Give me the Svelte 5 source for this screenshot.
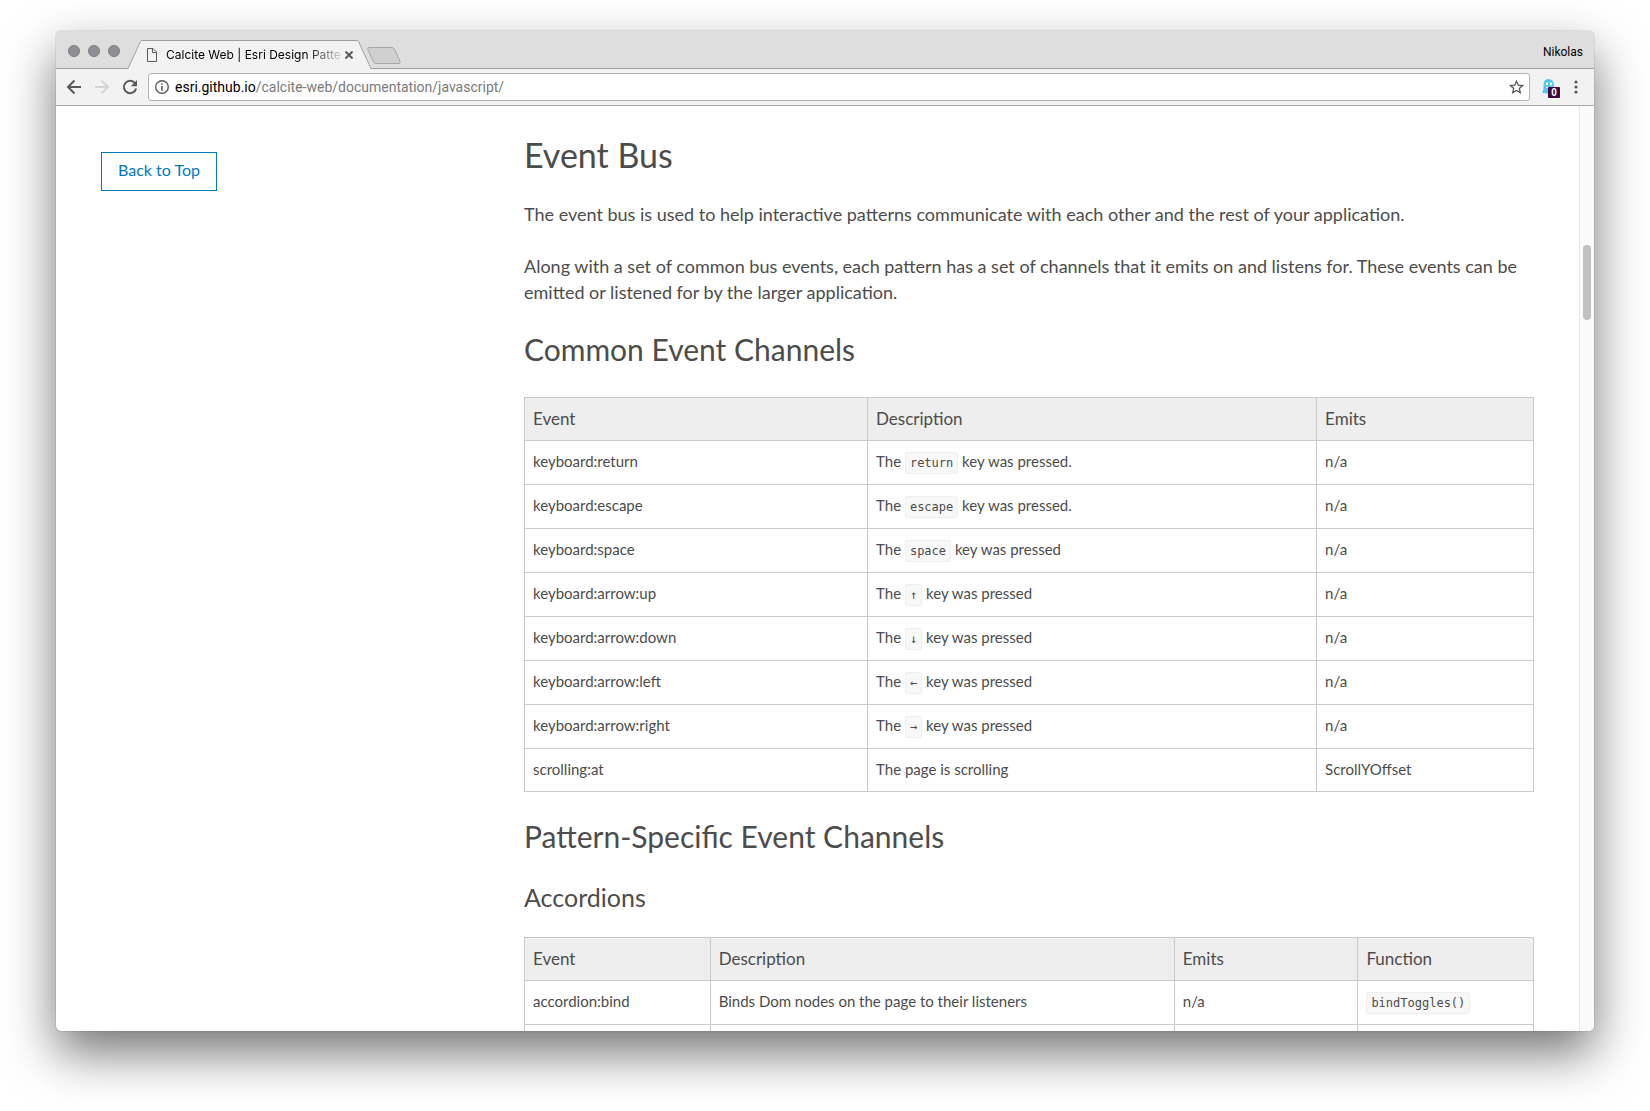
<script>
  const commonEvents = [
    { event: 'keyboard:return', key: 'return', after: 'key was pressed.', emits: 'n/a' },
    { event: 'keyboard:escape', key: 'escape', after: 'key was pressed.', emits: 'n/a' },
    { event: 'keyboard:space', key: 'space', after: 'key was pressed', emits: 'n/a' },
    { event: 'keyboard:arrow:up', key: '↑', after: 'key was pressed', emits: 'n/a' },
    { event: 'keyboard:arrow:down', key: '↓', after: 'key was pressed', emits: 'n/a' },
    { event: 'keyboard:arrow:left', key: '←', after: 'key was pressed', emits: 'n/a' },
    { event: 'keyboard:arrow:right', key: '→', after: 'key was pressed', emits: 'n/a' },
    { event: 'scrolling:at', text: 'The page is scrolling', emits: 'ScrollYOffset' },
  ];
</script>

<div class="window">
  <header class="tab-strip">
    <div class="lights"><i></i><i></i><i></i></div>
    <div class="tab">
      <svg class="edge" width="14" height="29" viewBox="0 0 14 29" aria-hidden="true">
        <path d="M0 29V28.5L12.5 1.5Q13 .5 14 .5V29Z" fill="#f2f2f2" />
        <path d="M0 28.5L12.5 1.5Q13 .5 14 .5" fill="none" stroke="#a0a0a0" />
      </svg>
      <div class="tab-body">
        <svg width="10" height="14" viewBox="0 0 10 14" fill="none" stroke="#5a5a5a" aria-hidden="true">
          <path d="M.5.5H6L9.5 4V13.5H.5ZM5.5.5V4.5H9.5" />
        </svg>
        <span class="tab-title">Calcite Web | Esri Design Patte</span>
        <button class="plain close" aria-label="Close tab">
          <svg width="8" height="8" viewBox="0 0 8 8" stroke="#5a5a5a" stroke-width="2"><path d="M.5.5L7.5 7.5M7.5.5L.5 7.5" /></svg>
        </button>
      </div>
      <svg class="edge" width="14" height="29" viewBox="0 0 14 29" aria-hidden="true">
        <path d="M14 29V28.5L1.5 1.5Q1 .5 0 .5V29Z" fill="#f2f2f2" />
        <path d="M14 28.5L1.5 1.5Q1 .5 0 .5" fill="none" stroke="#a0a0a0" />
      </svg>
    </div>
    <button class="plain new-tab" aria-label="New tab">
      <svg width="34" height="17" viewBox="0 0 34 17">
        <path d="M2 .5H25Q26.500 .5 27.500 2L33 14.500Q33.500 16.500 32 16.500H9Q7.500 16.500 6.500 15L.8 2.500Q.3.5 2 .5Z" fill="#d0d0d0" stroke="#a6a6a6" />
      </svg>
    </button>
    <span class="profile">Nikolas</span>
  </header>

  <nav class="toolbar" aria-label="Browser">
    <button class="plain" aria-label="Back">
      <svg width="16" height="16" viewBox="0 0 16 16" fill="none" stroke="#5a5a5a" stroke-width="2"><path d="M15 8H2M8.500 1.500L2 8L8.500 14.500" /></svg>
    </button>
    <button class="plain" aria-label="Forward" disabled>
      <svg width="16" height="16" viewBox="0 0 16 16" fill="none" stroke="#d4d4d4" stroke-width="2"><path d="M1 8H14M7.500 1.500L14 8L7.500 14.500" /></svg>
    </button>
    <button class="plain" aria-label="Reload">
      <svg width="16" height="16" viewBox="0 0 16 16"><path d="M13 4.200A6.200 6.200 0 1 0 14.100 9.500" fill="none" stroke="#5a5a5a" stroke-width="2" /><path d="M15 1V7.200H8.800Z" fill="#5a5a5a" /></svg>
    </button>
    <div class="address">
      <svg width="14" height="14" viewBox="0 0 14 14" aria-hidden="true"><circle cx="7" cy="7" r="6.300" fill="none" stroke="#5a5a5a" stroke-width="1.400" /><path d="M6.200 3.200H7.800V4.800H6.200ZM6.200 6H7.800V10.800H6.200Z" fill="#5a5a5a" /></svg>
      <a class="url" href="#event-bus"><b>esri.github.io</b>/calcite-web/documentation/javascript/</a>
      <button class="plain" aria-label="Bookmark">
        <svg width="15" height="14" viewBox="0 0 15 14"><path d="M7.500 1.300L9.300 5.200L13.500 5.600L10.300 8.400L11.300 12.600L7.500 10.400L3.700 12.600L4.700 8.400L1.500 5.600L5.700 5.200Z" fill="none" stroke="#5a5a5a" stroke-width="1.300" /></svg>
      </button>
    </div>
    <button class="plain ghost" aria-label="Ghostery">
      <svg width="13" height="16" viewBox="0 0 13 16"><path d="M1.500 6Q1.500 0 6.500 0T12 6V14Q10.500 16 9 14Q7.500 16 6 14Q4 15.500 2.500 13.500Q1 15 0 13.500Q2 11 1.500 6Z" fill="#56c6ec" /><ellipse cx="5" cy="4.700" rx="1.200" ry="1.500" fill="#fff" /><ellipse cx="9" cy="4.700" rx="1.200" ry="1.500" fill="#fff" /><path d="M4 8Q7 10.500 10 8" stroke="#fff" fill="none" /></svg>
      <span class="badge">0</span>
    </button>
    <button class="plain menu" aria-label="Menu">
      <svg width="4" height="14" viewBox="0 0 4 14" fill="#5a5a5a"><circle cx="2" cy="2" r="1.600" /><circle cx="2" cy="7" r="1.600" /><circle cx="2" cy="12" r="1.600" /></svg>
    </button>
  </nav>

  <div class="viewport">
    <div class="page">
      <aside><a class="top-link" href="#event-bus">Back to Top</a></aside>
      <main>
        <h1 id="event-bus">Event Bus</h1>
        <p>The event bus is used to help interactive patterns communicate with each other and the rest of your application.</p>
        <p>Along with a set of common bus events, each pattern has a set of channels that it emits on and listens for. These events can be emitted or listened for by the larger application.</p>

        <h2>Common Event Channels</h2>
        <table class="common">
          <thead>
            <tr><th>Event</th><th>Description</th><th>Emits</th></tr>
          </thead>
          <tbody>
            {#each commonEvents as row}
              <tr>
                <td>{row.event}</td>
                <td>{#if row.key}The <code>{row.key}</code> {row.after}{:else}{row.text}{/if}</td>
                <td>{row.emits}</td>
              </tr>
            {/each}
          </tbody>
        </table>

        <h2>Pattern-Specific Event Channels</h2>
        <h3>Accordions</h3>
        <table class="accordions">
          <thead>
            <tr><th>Event</th><th>Description</th><th>Emits</th><th>Function</th></tr>
          </thead>
          <tbody>
            <tr><td>accordion:bind</td><td>Binds Dom nodes on the page to their listeners</td><td>n/a</td><td><code>bindToggles()</code></td></tr>
            <tr><td></td><td></td><td></td><td></td></tr>
          </tbody>
        </table>
      </main>
    </div>
    <div class="scrollbar"><div class="thumb"></div></div>
  </div>
</div>

<style>
  :global(body) { margin: 0; background: #fff; }
  :global(#app) { overflow: hidden; }
  * { box-sizing: border-box; }

  .window {
    display: flex;
    flex-direction: column;
    height: calc(100vh - 111px);
    margin: 31px 56px 80px;
    border-radius: 5px;
    overflow: hidden;
    background: #fff;
    box-shadow: 0 0 1px rgba(0, 0, 0, .6), 0 22px 50px rgba(0, 0, 0, .55);
    font-family: Roboto, "Liberation Sans", sans-serif;
    color: #000;
  }
  svg { display: block; flex: none; }
  .plain { display: flex; padding: 0; border: 0; background: none; }

  .tab-strip {
    display: flex;
    flex: none;
    align-items: flex-end;
    height: 38px;
    background: #dedede;
    box-shadow: inset 0 -1px #a0a0a0;
    font-size: 12px;
    line-height: 16px;
  }
  .lights { display: flex; gap: 8px; align-self: center; padding: 2px 8px 0 12px; }
  .lights i { width: 12px; height: 12px; border: 1px solid #7c7c80; border-radius: 50%; background: #8e8e93; }
  .tab { display: flex; width: 243px; }
  .tab-body {
    display: flex;
    flex: 1;
    min-width: 0;
    align-items: center;
    height: 29px;
    padding: 0 4px 0 5px;
    border-top: 1px solid #a0a0a0;
    background: #f2f2f2;
  }
  .tab-title {
    flex: 1;
    margin-left: 9px;
    font-family: Inter, Roboto, sans-serif;
    white-space: nowrap;
    mask-image: linear-gradient(to right, #000 140px, transparent 180px);
  }
  .new-tab { margin: 0 0 5px -4px; }
  .profile { align-self: center; margin: 3px 11px 0 auto; }

  .toolbar {
    display: flex;
    flex: none;
    align-items: center;
    gap: 12px;
    height: 37px;
    padding: 0 16px 0 10px;
    background: #f2f2f2;
    border-bottom: 1px solid #a9a9a9;
  }
  .address {
    display: flex;
    flex: 1;
    align-items: center;
    height: 28px;
    margin-left: -2px;
    padding: 0 5px 0 6px;
    border: 1px solid #b4b4b4;
    border-radius: 3px;
    background: #fff;
  }
  .url { flex: 1; margin-left: 6px; font-size: 14px; line-height: 20px; color: #7a7a7a; text-decoration: none; }
  .url b { font-weight: 400; color: #000; }
  .ghost { position: relative; width: 20px; }
  .badge {
    position: absolute;
    left: 6px;
    top: 8px;
    width: 12px;
    height: 11px;
    border-radius: 1px;
    background: #3c0a3c;
    color: #fff;
    font-size: 10px;
    font-weight: 700;
    line-height: 11px;
    text-align: center;
  }

  .viewport { display: flex; flex: 1; min-height: 0; }
  .page {
    display: grid;
    flex: 1;
    grid-template-columns: 423fr 1010fr;
    align-items: start;
    padding: 0 45px;
    overflow: hidden;
    font-family: Lato, "Open Sans", sans-serif;
    font-size: 17px;
    line-height: 26px;
    color: #4c4c4c;
  }
  aside { padding-top: 46px; }
  .top-link {
    display: inline-block;
    padding: 4px 16px 7px;
    border: 1px solid #0079c1;
    font-size: 16px;
    color: #0079c1;
    text-decoration: none;
  }
  h1, h2, h3 { margin: 0; font-weight: 400; }
  h1 { padding: 28px 0 25px; font-size: 34px; line-height: 42px; }
  h2 { margin-bottom: 30px; font-size: 30px; line-height: 36px; }
  h3 { margin-bottom: 27px; font-size: 25px; line-height: 26px; }
  p { margin: 0 0 26px; font-size: 18px; }

  table { width: 100%; table-layout: fixed; border-collapse: collapse; margin-bottom: 26px; }
  th, td { padding: 8px; border: 1px solid #cacaca; text-align: left; vertical-align: baseline; }
  th { background: #eee; font-weight: 400; }
  td { height: 44px; padding: 7px 8px 9px; font-size: 15px; }
  .common tr:last-child td { height: 43px; }
  .common th:nth-child(1) { width: 34%; }
  .common th:nth-child(3) { width: 21.5%; }
  .accordions th:nth-child(1) { width: 18.4%; }
  .accordions th:nth-child(2) { width: 46%; }
  .accordions th:nth-child(3) { width: 18.2%; }
  code {
    padding: 3px 4px;
    border: 1px solid #efefef;
    border-radius: 3px;
    background: #f8f8f8;
    font-family: "DejaVu Sans Mono", monospace;
    font-size: 12px;
    line-height: 16px;
  }

  .scrollbar { flex: none; width: 15px; padding: 139px 3px 0; border-left: 1px solid #e8e8e8; background: #fafafa; }
  .thumb { height: 75px; border-radius: 4px; background: #c1c1c1; }
</style>
